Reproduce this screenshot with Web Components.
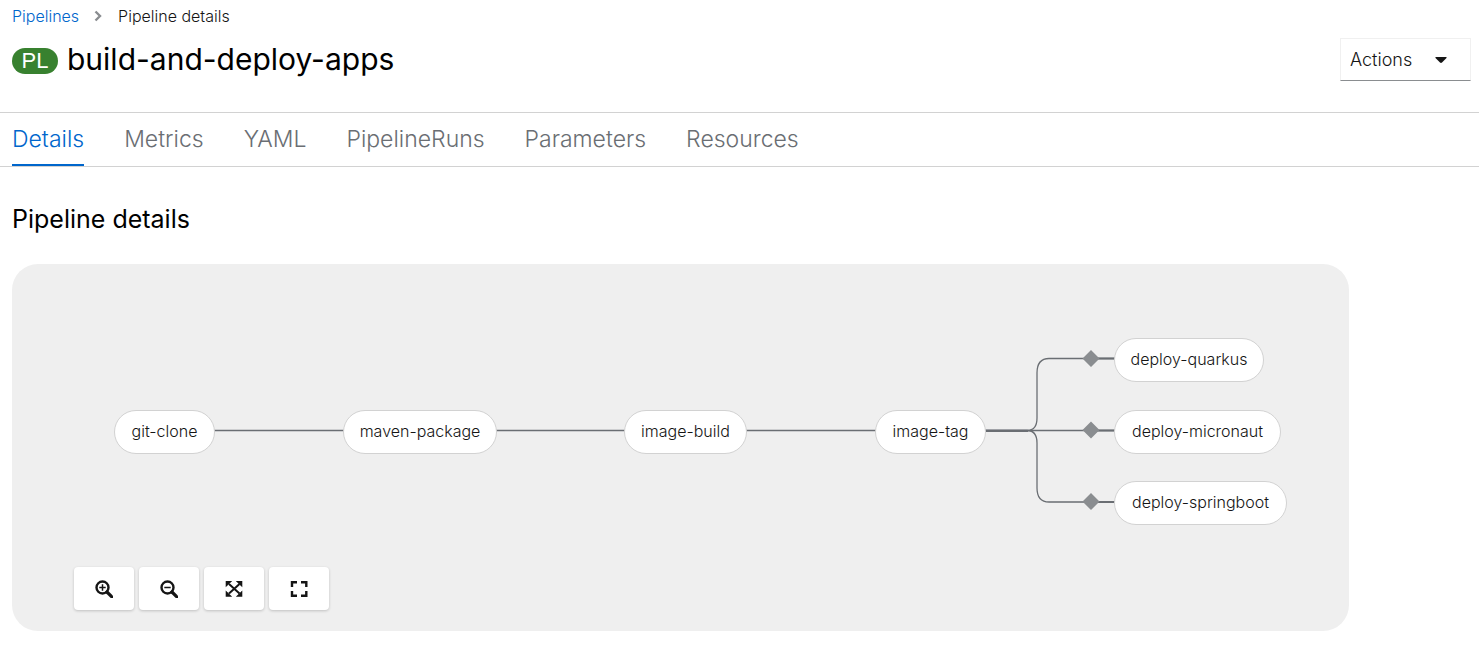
<!DOCTYPE html>
<html lang="en">
<head>
<meta charset="utf-8">
<title>build-and-deploy-apps · Pipeline details</title>
<style>
  body { margin: 0; background: #fff; color: #151515; font-family: Inter, "Liberation Sans", sans-serif; font-weight: 300; }
</style>
</head>
<body>
<pipeline-page></pipeline-page>

<script>
const define = (name, html, setup) => {
  const template = document.createElement('template');
  template.innerHTML = html;
  customElements.define(name, class extends HTMLElement {
    connectedCallback() {
      if (this.shadowRoot) return;
      this.attachShadow({ mode: 'open' }).append(template.content.cloneNode(true));
      if (setup) setup(this, this.shadowRoot);
    }
  });
};

define('page-breadcrumb', `
  <style>
    :host { display: block; font-size: 16px; line-height: 24px; }
    ol { display: flex; align-items: center; gap: 15px; list-style: none; margin: 0; padding: 0; }
    li { display: flex; align-items: center; gap: 16px; }
    svg { width: 8px; height: 12px; }
    ::slotted(a) { color: #06c; text-decoration: none; }
  </style>
  <nav aria-label="Breadcrumb"><ol>
    <li><slot name="parent"></slot></li>
    <li><svg viewBox="0 0 8 12" aria-hidden="true"><path d="M1.5 1.5 6 6 1.5 10.5" fill="none" stroke="#8a8d90" stroke-width="2.4"/></svg><slot></slot></li>
  </ol></nav>`);

define('resource-title', `
  <style>
    :host { display: flex; align-items: center; gap: 9px; }
    .badge { box-sizing: border-box; width: 46px; height: 26px; margin-top: 4px; border-radius: 13px; background: #38812f; color: #fff;
      font: 400 22px/26px "Liberation Sans", sans-serif; text-align: center; }
    h1 { margin: 0; color: #000; font-size: 30px; font-weight: 400; line-height: 36px; }
  </style>
  <span class="badge" title="Pipeline">PL</span><h1><slot></slot></h1>`);

define('actions-menu', `
  <style>
    :host { display: block; }
    button { display: flex; align-items: center; justify-content: space-between; box-sizing: border-box; width: 131px; height: 43px; padding: 0 23px 0 9px;
      border: 1px solid #f0f0f0; border-bottom-color: #8a8d90; background: #fff; color: #151515; font: inherit; font-size: 18px; line-height: 24px; }
    svg { width: 12px; height: 6px; }
  </style>
  <button type="button" aria-haspopup="menu"><slot></slot><svg viewBox="0 0 12 6" aria-hidden="true"><path d="M1 0h10q1 .4.5 1L7 5.600q-1 .8-2 0L.5 1Q0 .4 1 0z" fill="#151515"/></svg></button>`);

define('page-tabs', `
  <style>
    :host { display: flex; gap: 40px; padding: 0 12px; border-top: 1px solid #d2d2d2; border-bottom: 1px solid #d2d2d2; }
    ::slotted(a) { box-sizing: border-box; height: 53px; border-bottom: 2px solid transparent; color: #6a6e73; font-size: 23px; line-height: 53px; text-decoration: none; white-space: nowrap; }
    ::slotted(a[aria-current]) { border-color: #06c; color: #06c; }
  </style>
  <slot></slot>`);

define('pipeline-node', `
  <style>
    :host { position: absolute; box-sizing: border-box; height: 44px; border: 1px solid #d2d2d2; border-radius: 22px; background: #fff;
      font-size: 16px; line-height: 41px; text-align: center; white-space: nowrap; }
  </style>
  <slot></slot>`, host => {
    host.style.left = host.getAttribute('x') + 'px';
    host.style.top = host.getAttribute('y') + 'px';
    host.style.width = host.getAttribute('width') + 'px';
  });

define('pipeline-graph', `
  <style>
    :host { display: block; position: relative; height: 302px; }
    svg { display: block; width: 1300px; height: 302px; }
  </style>
  <svg viewBox="0 0 1300 302" aria-hidden="true">
    <g fill="none" stroke="#6a6e73" stroke-width="1.3">
      <path d="M202 166.500H332M484 166.500H613M734 166.500H864M973 166.500H1103"/>
      <path d="M973 166.500H1015Q1025 166.500 1025 154V109Q1025 94.500 1037 94.500H1103"/>
      <path d="M973 166.500H1015Q1025 166.500 1025 179V224Q1025 238 1037 238H1103"/>
      <path stroke-width="2" d="M974 167H1016M1080 94.500H1103M1080 166.500H1103M1080 238H1103"/>
    </g>
    <path fill="#8a8d90" d="M1079 86l8.500 8.500-8.500 8.500-8.500-8.500zM1079 157.500l8.500 8.500-8.500 8.500-8.500-8.500zM1079 229l8.500 8.500-8.500 8.500-8.500-8.500z"/>
  </svg>
  <slot></slot>`);

const lens = '<circle cx="7.500" cy="7.500" r="6" fill="none" stroke="#151515" stroke-width="2.400"/><path d="M12 12l5 5" stroke="#151515" stroke-width="3.200" stroke-linecap="round"/>';
const icons = {
  plus: lens + '<path d="M4.300 7.500h6.400M7.500 4.300v6.400" stroke="#151515" stroke-width="1.500"/>',
  minus: lens + '<path d="M4.300 7.500h6.400" stroke="#151515" stroke-width="1.500"/>',
  fit: '<path d="M4 4l10.500 9.500M14.500 4L4 13.500" stroke="#151515" stroke-width="2"/><path d="M.7 1h6.500L.7 7.300zM17.300 1v6.300L10.800 1zM.7 16.800v-6.300l6.500 6.300zM17.300 16.800h-6.500l6.500-6.300z" fill="#151515"/>',
  expand: '<path d="M2 7V2.200h5M11 2.200h5.300V7M16.300 11v4.800H11M7 15.800H2V11" fill="none" stroke="#151515" stroke-width="2.400"/>'
};
define('graph-control', `
  <style>
    :host { display: block; }
    button { display: flex; align-items: center; justify-content: center; width: 60px; height: 43px; padding: 0; border: 0; border-radius: 4px; background: #fff; box-shadow: 0 1px 3px rgba(3,3,3,.2); }
    svg { width: 18px; height: 18px; }
  </style>
  <button type="button"><svg viewBox="0 0 18 18" aria-hidden="true"></svg></button>`, (host, root) => {
    root.querySelector('svg').innerHTML = icons[host.getAttribute('icon')];
    root.querySelector('button').setAttribute('aria-label', host.getAttribute('label'));
  });

define('graph-panel', `
  <style>
    :host { display: block; box-sizing: border-box; margin: 0 130px 0 12px; padding-bottom: 21px; border-radius: 26px; background: #efefef; overflow: hidden; }
    .controls { display: flex; gap: 5px; padding: 1px 0 0 62px; }
  </style>
  <slot></slot>
  <div class="controls" role="toolbar" aria-label="Graph controls"><slot name="controls"></slot></div>`);

define('pipeline-page', `
  <style>
    :host { display: block; }
    header { display: flex; align-items: flex-start; justify-content: space-between; padding: 4px 8px 31px 12px; }
    resource-title { margin-top: 13px; }
    actions-menu { margin-top: 34px; }
    h2 { margin: 34px 12px 27px; color: #000; font-size: 25px; font-weight: 400; line-height: 36px; }
  </style>
  <header>
    <div>
      <page-breadcrumb><a slot="parent" href="#pipelines">Pipelines</a><span aria-current="page">Pipeline details</span></page-breadcrumb>
      <resource-title>build-and-deploy-apps</resource-title>
    </div>
    <actions-menu>Actions</actions-menu>
  </header>
  <page-tabs>
    <a href="#details" aria-current="page">Details</a><a href="#metrics">Metrics</a><a href="#yaml">YAML</a><a href="#runs">PipelineRuns</a><a href="#parameters">Parameters</a><a href="#resources">Resources</a>
  </page-tabs>
  <main>
    <h2>Pipeline details</h2>
    <graph-panel>
      <pipeline-graph>
        <pipeline-node x="102" y="146" width="101">git-clone</pipeline-node>
        <pipeline-node x="331" y="146" width="154">maven-package</pipeline-node>
        <pipeline-node x="612" y="146" width="123">image-build</pipeline-node>
        <pipeline-node x="863" y="146" width="111">image-tag</pipeline-node>
        <pipeline-node x="1102" y="74" width="150">deploy-quarkus</pipeline-node>
        <pipeline-node x="1102" y="146" width="167">deploy-micronaut</pipeline-node>
        <pipeline-node x="1102" y="217" width="173">deploy-springboot</pipeline-node>
      </pipeline-graph>
      <graph-control slot="controls" icon="plus" label="Zoom in"></graph-control>
      <graph-control slot="controls" icon="minus" label="Zoom out"></graph-control>
      <graph-control slot="controls" icon="fit" label="Fit to screen"></graph-control>
      <graph-control slot="controls" icon="expand" label="Reset view"></graph-control>
    </graph-panel>
  </main>`);
</script>
</body>
</html>
